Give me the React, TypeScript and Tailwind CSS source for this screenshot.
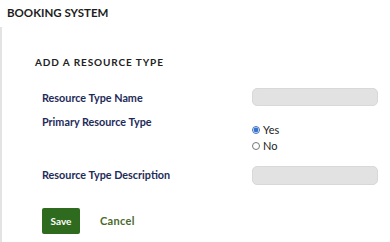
import { useState } from "react";

export default function App() {
  const [primary, setPrimary] = useState<"yes" | "no">("yes");

  return (
    <div className="w-[390px] h-[242px] bg-white overflow-hidden flex flex-col font-['Lato',sans-serif]">
      {/* Header */}
      <div className="h-[27px] pl-[7px] pt-[6px] text-[11.5px] font-bold text-[#1d1d1d] leading-[13px]">
        BOOKING SYSTEM
      </div>

      {/* Panel */}
      <div className="flex-1 border-l-2 border-[#e3e3e3] pl-[33px] pt-[28px]">
        <h2 className="text-[10px] font-bold tracking-[0.9px] text-[#222] leading-[14px]">
          ADD A RESOURCE TYPE
        </h2>

        <div className="mt-[19px] grid grid-cols-[210px_126px] pl-[7px]">
          <label className="text-[10.8px] font-bold text-[#1e2b59] leading-[13px] pt-[3px]">
            Resource Type Name
          </label>
          <input className="h-[18px] rounded-[5px] bg-[#e2e2e2] border border-[#d8d8d8] outline-none" />

          <label className="mt-[9px] text-[10.8px] font-bold text-[#1e2b59] leading-[13px]">
            Primary Resource Type
          </label>
          <div className="mt-[17px] flex flex-col gap-[3px]">
            <label className="flex items-center gap-[3px] text-[11px] text-[#222] leading-[13px]">
              <input
                type="radio"
                name="primary"
                checked={primary === "yes"}
                onChange={() => setPrimary("yes")}
                className="w-[8px] h-[8px] m-0 accent-[#3b72c9]"
              />
              Yes
            </label>
            <label className="flex items-center gap-[3px] text-[11px] text-[#222] leading-[13px]">
              <input
                type="radio"
                name="primary"
                checked={primary === "no"}
                onChange={() => setPrimary("no")}
                className="w-[8px] h-[8px] m-0 accent-[#3b72c9]"
              />
              No
            </label>
          </div>

          <label className="mt-[16px] text-[10.8px] font-bold text-[#1e2b59] leading-[13px]">
            Resource Type Description
          </label>
          <input className="mt-[14px] h-[19px] rounded-[5px] bg-[#e2e2e2] border border-[#d8d8d8] outline-none" />
        </div>

        <div className="mt-[23px] pl-[7px] flex items-center gap-[20px]">
          <button className="w-[38px] h-[26px] rounded-[2px] bg-[#2f6b1e] text-white text-[10px] font-bold">
            Save
          </button>
          <button className="text-[11px] font-bold text-[#4a6a2c] tracking-[0.3px]">Cancel</button>
        </div>
      </div>
    </div>
  );
}
